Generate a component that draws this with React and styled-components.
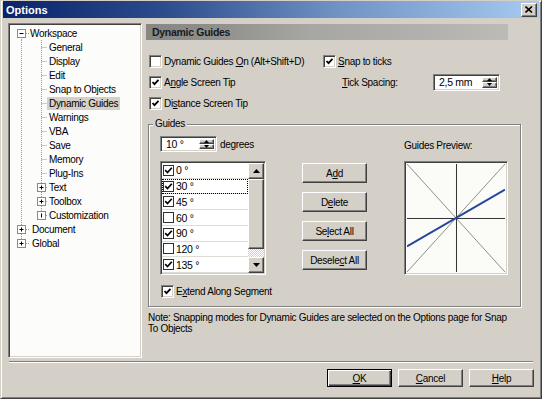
import React from 'react';
import styled, { createGlobalStyle, css } from 'styled-components';

const GlobalStyle = createGlobalStyle`
  html, body { margin: 0; padding: 0; background: #d4d0c8; }
  body { font-family: "Liberation Sans", Arial, sans-serif; font-size: 10px; letter-spacing: -0.3px; color: #000; }
  * { box-sizing: border-box; }
`;

const raised = css`
  background: #d4d0c8;
  border: 1px solid;
  border-color: #fff #404040 #404040 #fff;
  box-shadow: inset -1px -1px #808080;
`;

const sunken = css`
  border: 1px solid;
  border-color: #808080 #fff #fff #808080;
  box-shadow: inset 1px 1px #404040, inset -1px -1px #d4d0c8;
`;

const Window = styled.div`
  width: 542px;
  height: 399px;
  display: flex;
  flex-direction: column;
  background: #d4d0c8;
  border: 1px solid;
  border-color: #d4d0c8 #404040 #404040 #d4d0c8;
  box-shadow: inset 1px 1px #fff, inset -1px -1px #808080;
  padding: 0 2px 2px 2px;
`;

const TitleBar = styled.div`
  flex: none;
  height: 17px;
  display: flex;
  align-items: center;
  justify-content: space-between;
  padding: 0 2px 0 3px;
  background: linear-gradient(90deg, #0a246a 0%, #2c4c8c 30%, #6f92c3 62%, #a6caf0 100%);
`;

const Title = styled.span`
  color: #fff;
  font-weight: bold;
  font-size: 11px;
  letter-spacing: 0;
`;

const CloseBtn = styled.div`
  ${raised};
  width: 16px;
  height: 14px;
  display: flex;
  align-items: center;
  justify-content: center;
`;

const Main = styled.div`
  flex: none;
  height: 341px;
  display: flex;
  padding: 5px 0 0 5px;
`;

const Tree = styled.div`
  ${sunken};
  flex: none;
  width: 134px;
  height: 335px;
  background: #fcfcfa;
  padding: 2px 0 0 1px;
  display: flex;
  flex-direction: column;
`;

const TreeRow = styled.div`
  height: 14px;
  display: flex;
  align-items: center;
  white-space: nowrap;
`;

const TreeLabel = styled.span`
  height: 13px;
  line-height: 13px;
  padding: 0 2px;
  margin-left: ${p => p.$gap || 0}px;
  background: ${p => (p.$selected ? '#d4d0c8' : 'transparent')};
`;

function Gutter({ width, v, h, box }) {
  const cx = 11.5;
  return (
    <svg width={width} height="14" style={{ flex: 'none', display: 'block' }}>
      {v !== 'none' && (
        <line
          x1={cx}
          x2={cx}
          y1={v === 'bottom' ? 7 : 0}
          y2={v === 'top' ? 7 : 14}
          stroke="#9a9a9a"
          strokeDasharray="1 1"
        />
      )}
      {h && (
        <line x1={box ? 16 : cx} x2={width} y1="7.5" y2="7.5" stroke="#9a9a9a" strokeDasharray="1 1" />
      )}
      {box && (
        <g>
          <rect x="7.5" y="3.5" width="8" height="8" fill="#fff" stroke="#8a8a8a" />
          {(box === 'minus' || box === 'plus') && <line x1="9.5" x2="13.5" y1="7.5" y2="7.5" stroke="#000" />}
          {(box === 'plus' || box === 'bar') && <line x1="11.5" x2="11.5" y1="5.5" y2="9.5" stroke="#000" />}
        </g>
      )}
    </svg>
  );
}

const treeData = [
  { label: 'Workspace', level: 0, a: 'bottom', box: 'minus' },
  { label: 'General', level: 1, b: 'full' },
  { label: 'Display', level: 1, b: 'full' },
  { label: 'Edit', level: 1, b: 'full' },
  { label: 'Snap to Objects', level: 1, b: 'full' },
  { label: 'Dynamic Guides', level: 1, b: 'full', selected: true },
  { label: 'Warnings', level: 1, b: 'full' },
  { label: 'VBA', level: 1, b: 'full' },
  { label: 'Save', level: 1, b: 'full' },
  { label: 'Memory', level: 1, b: 'full' },
  { label: 'Plug-Ins', level: 1, b: 'full' },
  { label: 'Text', level: 1, b: 'full', box: 'plus' },
  { label: 'Toolbox', level: 1, b: 'full', box: 'plus' },
  { label: 'Customization', level: 1, b: 'top', box: 'bar' },
  { label: 'Document', level: 0, a: 'full', box: 'plus' },
  { label: 'Global', level: 0, a: 'top', box: 'plus' },
];

const Page = styled.div`
  display: flex;
  flex-direction: column;
  margin-left: 4px;
`;

const HeaderBar = styled.div`
  margin-top: 1px;
  width: 362px;
  height: 16px;
  line-height: 16px;
  padding-left: 6px;
  font-weight: bold;
  font-size: 10.5px;
  color: #1a1a1a;
  background: linear-gradient(90deg, #868684 0%, #8e8e8c 18%, #a6a6a2 45%, #b2b0ae 75%, #bdbbb7 100%);
`;

const Options = styled.div`
  margin: 12px 0 0 3px;
  display: grid;
  grid-template-columns: 174px auto;
  grid-auto-rows: 18px;
  row-gap: 3px;
`;

const CheckLine = styled.label`
  display: flex;
  align-items: center;
  gap: 2px;
  white-space: nowrap;
  margin-left: ${p => p.$indent || 0}px;
`;

const Box = styled.span`
  ${sunken};
  flex: none;
  width: 13px;
  height: 13px;
  background: #fff;
  display: flex;
  align-items: center;
  justify-content: center;
`;

const Key = styled.span`
  text-decoration: underline;
`;

function Check({ checked }) {
  return (
    <Box>
      {checked && (
        <svg width="9" height="9" viewBox="0 0 9 9">
          <path d="M1.5 4 L3.5 6.2 L7.5 1.8" fill="none" stroke="#000" strokeWidth="1.8" />
        </svg>
      )}
    </Box>
  );
}

const TickRow = styled.div`
  display: flex;
  align-items: center;
  padding-left: 19px;
`;

const TickLabel = styled.span`
  width: 91px;
`;

const SpinField = styled.div`
  ${sunken};
  width: ${p => p.$w}px;
  height: ${p => p.$h}px;
  background: #fff;
  display: flex;
  align-items: stretch;
  padding: 2px;
`;

const SpinText = styled.span`
  flex: 1;
  padding-left: 3px;
  display: flex;
  align-items: center;
  font-size: 10.5px;
`;

const SpinBtns = styled.div`
  width: 15px;
  display: flex;
  flex-direction: column;
`;

const SpinBtn = styled.div`
  ${raised};
  flex: 1;
  display: flex;
  align-items: center;
  justify-content: center;
`;

function Tri({ dir, w = 5 }) {
  const h = Math.ceil(w / 2);
  return (
    <svg width={w} height={h} style={{ display: 'block' }}>
      <path d={dir === 'up' ? `M0 ${h} L${w / 2} 0 L${w} ${h} Z` : `M0 0 L${w / 2} ${h} L${w} 0 Z`} fill="#000" />
    </svg>
  );
}

function Spin({ w, h, value }) {
  return (
    <SpinField $w={w} $h={h}>
      <SpinText>{value}</SpinText>
      <SpinBtns>
        <SpinBtn><Tri dir="up" /></SpinBtn>
        <SpinBtn><Tri dir="down" /></SpinBtn>
      </SpinBtns>
    </SpinField>
  );
}

const Group = styled.div`
  position: relative;
  margin: 12px 0 0 2px;
  width: 373px;
  height: 183px;
  border: 1px solid #808080;
  box-shadow: inset 1px 1px #fff, 1px 1px #fff;
  padding: 11px 0 0 11px;
`;

const GroupLabel = styled.span`
  position: absolute;
  top: -7px;
  left: 4px;
  padding: 0 2px;
  background: #d4d0c8;
  line-height: 12px;
`;

const GuidesGrid = styled.div`
  display: grid;
  grid-template-columns: 142px 102px 104px;
  grid-template-rows: 16px 114px 14px;
  row-gap: 9px;
`;

const DegreeRow = styled.div`
  display: flex;
  align-items: center;
  gap: 3px;
`;

const PreviewLabel = styled.span`
  align-self: end;
  margin-bottom: 1px;
`;

const List = styled.div`
  ${sunken};
  width: 106px;
  height: 114px;
  background: #fff;
  display: flex;
  padding: 1px;
`;

const Items = styled.div`
  flex: 1;
  display: flex;
  flex-direction: column;
`;

const Item = styled.div`
  height: 16px;
  display: flex;
  align-items: center;
  gap: 2px;
  padding-left: 1px;
  border-bottom: 1px solid #dedbd4;
  font-size: 10.5px;
  outline: ${p => (p.$focus ? '1px dotted #000' : 'none')};
  outline-offset: -1px;
`;

const SmallBox = styled.span`
  width: 11px;
  height: 11px;
  border: 1px solid #303030;
  background: #fff;
  display: flex;
  align-items: center;
  justify-content: center;
`;

function SmallCheck({ checked }) {
  return (
    <SmallBox>
      {checked && (
        <svg width="9" height="9" viewBox="0 0 9 9">
          <path d="M1.2 4.2 L3.5 6.6 L7.8 1.8" fill="none" stroke="#000" strokeWidth="1.7" />
        </svg>
      )}
    </SmallBox>
  );
}

const ScrollBar = styled.div`
  width: 16px;
  display: flex;
  flex-direction: column;
`;

const ScrollBtn = styled.div`
  ${raised};
  height: 16px;
  display: flex;
  align-items: center;
  justify-content: center;
`;

const Track = styled.div`
  flex: 1;
  display: flex;
  flex-direction: column;
  background: repeating-conic-gradient(#fff 0 25%, #d4d0c8 0 50%) 0 0 / 2px 2px;
`;

const Thumb = styled.div`
  ${raised};
  height: 70px;
`;

const BtnCol = styled.div`
  display: flex;
  flex-direction: column;
  gap: 9px;
  padding-top: 2px;
`;

const Button = styled.div`
  ${raised};
  width: 65px;
  height: ${p => p.$h || 20}px;
  display: flex;
  align-items: center;
  justify-content: center;
  white-space: nowrap;
  ${p =>
    p.$default &&
    css`
      border-color: #000;
      box-shadow: inset 1px 1px #fff, inset -1px -1px #404040, inset -2px -2px #808080;
    `}
`;

const Preview = styled.div`
  ${sunken};
  width: 104px;
  height: 114px;
  background: #fbfbf7;
  padding: 2px;
`;

const ExtendLine = styled(CheckLine)`
  grid-column: 1 / 3;
  margin-left: 1px;
`;

const Note = styled.div`
  margin: 5px 0 0 2px;
  line-height: 11px;
  white-space: nowrap;
`;

const NoteLine = styled.span`
  display: block;
`;

const Separator = styled.div`
  flex: none;
  height: 2px;
  margin: 2px 6px 0 6px;
  border-top: 1px solid #808080;
  border-bottom: 1px solid #fff;
`;

const ButtonRow = styled.div`
  display: flex;
  justify-content: flex-end;
  gap: 6px;
  margin-top: 6px;
  padding-right: 5px;
`;

const items = [
  { t: '0 °', c: true },
  { t: '30 °', c: true, f: true },
  { t: '45 °', c: true },
  { t: '60 °', c: false },
  { t: '90 °', c: true },
  { t: '120 °', c: false },
  { t: '135 °', c: true },
];

export default function App() {
  return (
    <>
      <GlobalStyle />
      <Window>
        <TitleBar>
          <Title>Options</Title>
          <CloseBtn>
            <svg width="8" height="7" viewBox="0 0 8 7">
              <path d="M0.5 0.5 L7 6.5 M7 0.5 L0.5 6.5" stroke="#000" strokeWidth="1.6" />
            </svg>
          </CloseBtn>
        </TitleBar>
        <Main>
          <Tree>
            {treeData.map(n => (
              <TreeRow key={n.label}>
                {n.level === 0 ? (
                  <>
                    <Gutter width={20} v={n.a} h box={n.box} />
                    <TreeLabel $gap={n.label === 'Workspace' ? -2 : 0}>{n.label}</TreeLabel>
                  </>
                ) : (
                  <>
                    <Gutter width={20} v="full" />
                    <Gutter width={17} v={n.b} h box={n.box} />
                    <TreeLabel $selected={n.selected}>{n.label}</TreeLabel>
                  </>
                )}
              </TreeRow>
            ))}
          </Tree>
          <Page>
            <HeaderBar>Dynamic Guides</HeaderBar>
            <Options>
              <CheckLine>
                <Check />
                <span>Dynamic Guides <Key>O</Key>n (Alt+Shift+D)</span>
              </CheckLine>
              <CheckLine>
                <Check checked />
                <span><Key>S</Key>nap to ticks</span>
              </CheckLine>
              <CheckLine>
                <Check checked />
                <span>A<Key>n</Key>gle Screen Tip</span>
              </CheckLine>
              <TickRow>
                <TickLabel><Key>T</Key>ick Spacing:</TickLabel>
                <Spin w={67} h={17} value="2,5 mm" />
              </TickRow>
              <CheckLine>
                <Check checked />
                <span>Di<Key>s</Key>tance Screen Tip</span>
              </CheckLine>
            </Options>
            <Group>
              <GroupLabel>Guides</GroupLabel>
              <GuidesGrid>
                <DegreeRow>
                  <Spin w={57} h={16} value="10 °" />
                  <span>degrees</span>
                </DegreeRow>
                <span />
                <PreviewLabel>Guides Preview:</PreviewLabel>
                <List>
                  <Items>
                    {items.map(it => (
                      <Item key={it.t} $focus={it.f}>
                        <SmallCheck checked={it.c} />
                        <span>{it.t}</span>
                      </Item>
                    ))}
                  </Items>
                  <ScrollBar>
                    <ScrollBtn><Tri dir="up" w={7} /></ScrollBtn>
                    <Track><Thumb /></Track>
                    <ScrollBtn><Tri dir="down" w={7} /></ScrollBtn>
                  </ScrollBar>
                </List>
                <BtnCol>
                  <Button>A<Key>d</Key>d</Button>
                  <Button>D<Key>e</Key>lete</Button>
                  <Button>Se<Key>l</Key>ect All</Button>
                  <Button>Desele<Key>c</Key>t All</Button>
                </BtnCol>
                <Preview>
                  <svg width="98" height="108" viewBox="0 0 100 110" preserveAspectRatio="none" style={{ display: 'block' }}>
                    <line x1="0" y1="0" x2="100" y2="110" stroke="#8c8c8c" strokeWidth="1" />
                    <line x1="0" y1="110" x2="100" y2="0" stroke="#8c8c8c" strokeWidth="1" />
                    <line x1="50.5" y1="0" x2="50.5" y2="110" stroke="#303030" strokeWidth="1" />
                    <line x1="0" y1="55.5" x2="100" y2="55.5" stroke="#303030" strokeWidth="1" />
                    <line x1="0" y1="84" x2="100" y2="26" stroke="#24479a" strokeWidth="2" />
                  </svg>
                </Preview>
                <ExtendLine>
                  <Check checked />
                  <span>E<Key>x</Key>tend Along Segment</span>
                </ExtendLine>
              </GuidesGrid>
            </Group>
            <Note>
              <NoteLine>Note: Snapping modes for Dynamic Guides are selected on the Options page for Snap</NoteLine>
              <NoteLine>To Objects</NoteLine>
            </Note>
          </Page>
        </Main>
        <Separator />
        <ButtonRow>
          <Button $default $h={18}><Key>O</Key>K</Button>
          <Button $h={18}><Key>C</Key>ancel</Button>
          <Button $h={18}><Key>H</Key>elp</Button>
        </ButtonRow>
      </Window>
    </>
  );
}
